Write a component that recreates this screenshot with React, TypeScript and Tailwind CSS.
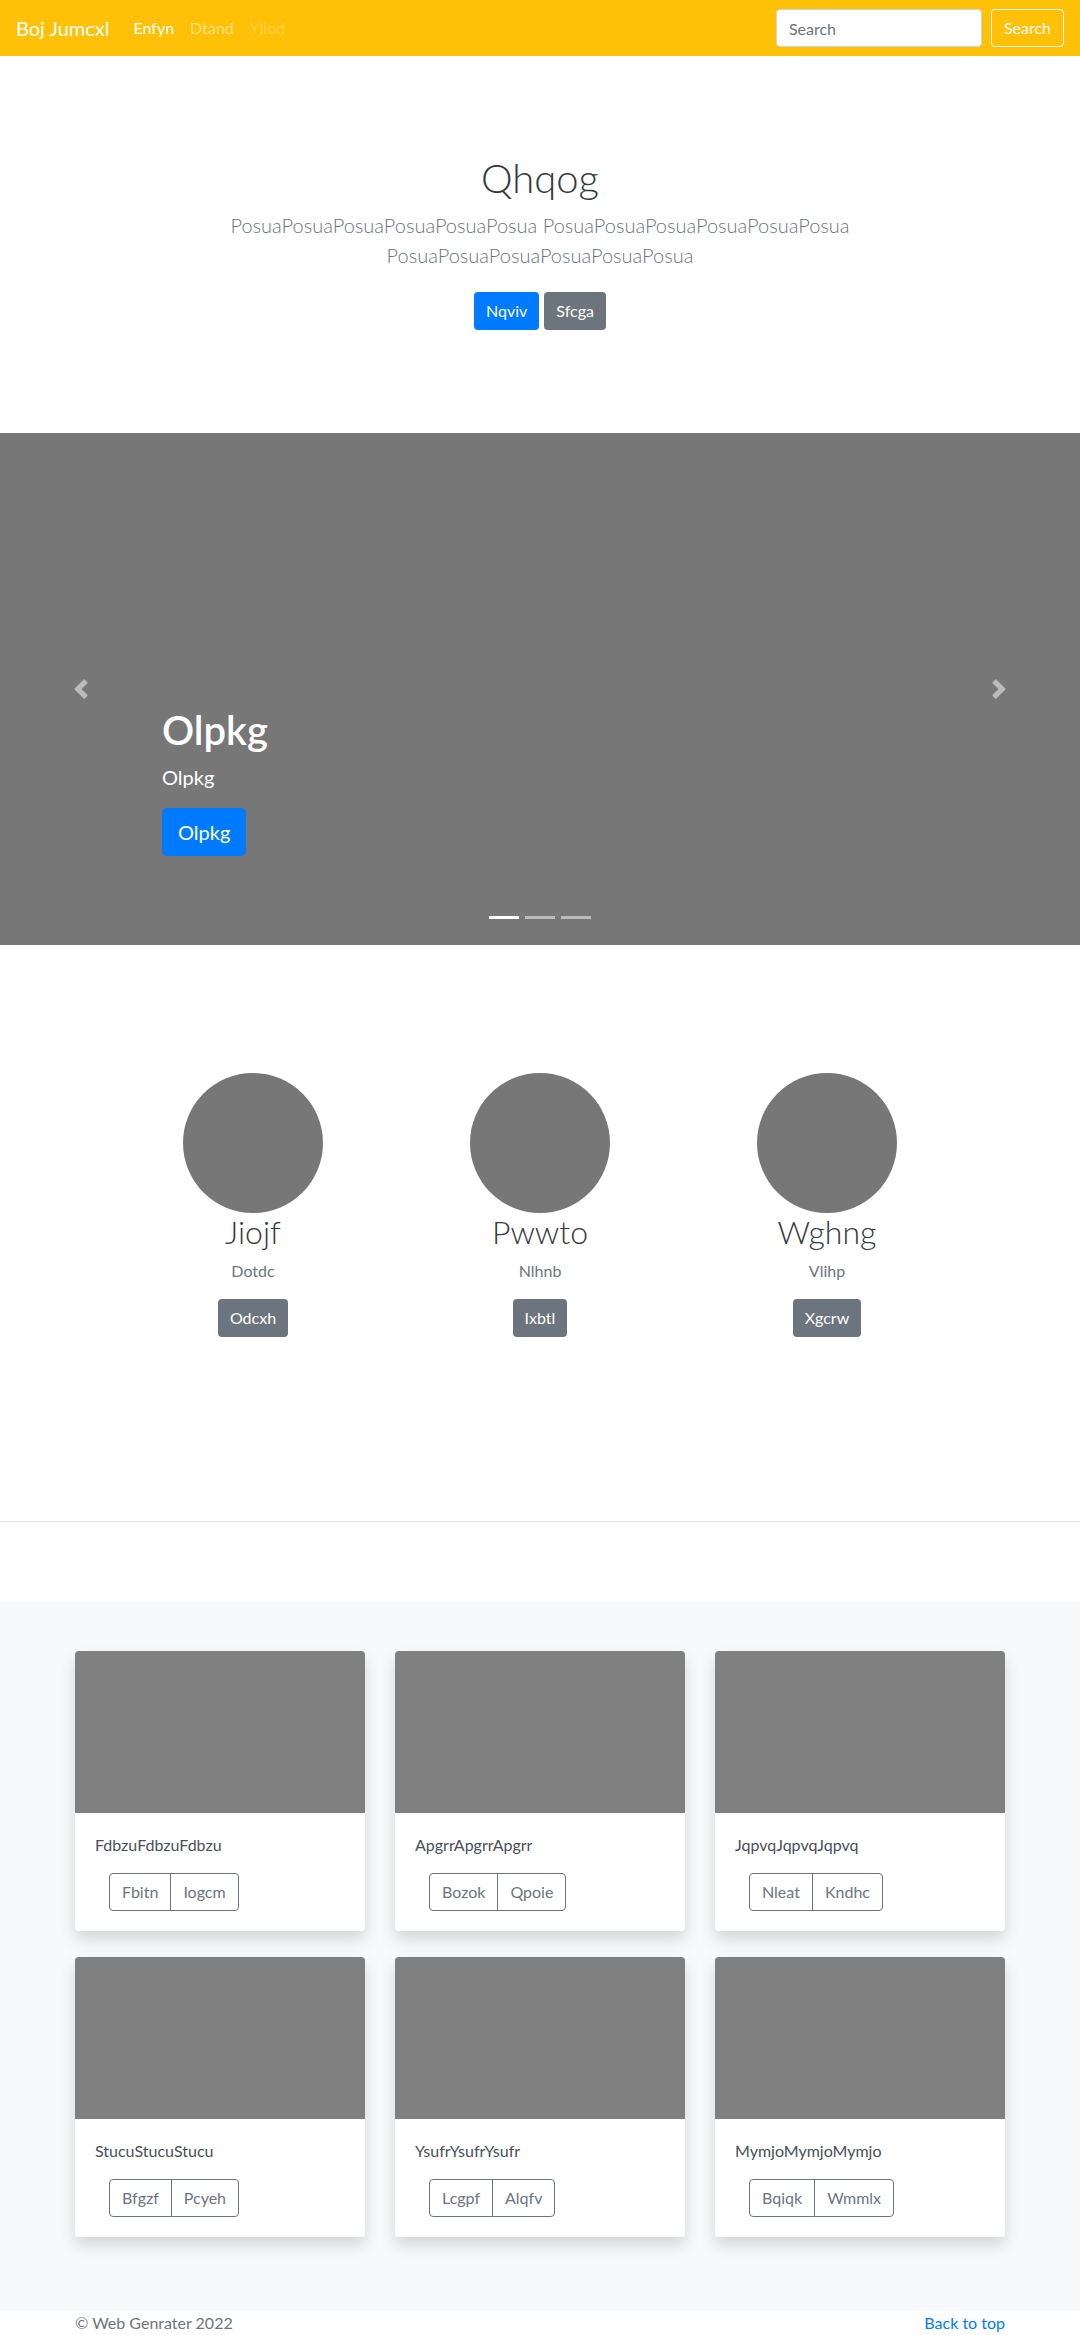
import React from "react";

const navLinks = [
  { label: "Enfyn", cls: "text-white" },
  { label: "Dtand", cls: "text-white/50" },
  { label: "Yllod", cls: "text-white/25" },
];

const team = [
  { name: "Jiojf", role: "Dotdc", action: "Odcxh" },
  { name: "Pwwto", role: "Nlhnb", action: "Ixbtl" },
  { name: "Wghng", role: "Vlihp", action: "Xgcrw" },
];

const cards = [
  { text: "FdbzuFdbzuFdbzu", buttons: ["Fbitn", "Iogcm"] },
  { text: "ApgrrApgrrApgrr", buttons: ["Bozok", "Qpoie"] },
  { text: "JqpvqJqpvqJqpvq", buttons: ["Nleat", "Kndhc"] },
  { text: "StucuStucuStucu", buttons: ["Bfgzf", "Pcyeh"] },
  { text: "YsufrYsufrYsufr", buttons: ["Lcgpf", "Alqfv"] },
  { text: "MymjoMymjoMymjo", buttons: ["Bqiqk", "Wmmlx"] },
];

const Chevron = ({ dir }: { dir: "prev" | "next" }) => (
  <svg viewBox="0 0 8 8" className="w-5 h-5" fill="#fff">
    {dir === "prev" ? (
      <path d="M5.25 0l-4 4 4 4 1.5-1.5-2.5-2.5 2.5-2.5-1.5-1.5z" />
    ) : (
      <path d="M2.75 0l-1.5 1.5 2.5 2.5-2.5 2.5 1.5 1.5 4-4-4-4z" />
    )}
  </svg>
);

const App: React.FC = () => {
  return (
    <div className="min-h-screen bg-white text-[#212529] font-['Lato','Noto_Sans',sans-serif] text-[16px] leading-6">
      {/* Navbar */}
      <nav className="h-14 bg-[#ffc107] flex items-center px-4">
        <span className="text-[20px] leading-[30px] text-white mr-4">Boj Jumcxl</span>
        <ul className="flex items-center">
          {navLinks.map((l) => (
            <li key={l.label} className={`px-2 ${l.cls}`}>
              {l.label}
            </li>
          ))}
        </ul>
        <div className="ml-auto flex items-center gap-[9px]">
          <input
            placeholder="Search"
            className="w-[206px] h-[38px] px-3 bg-white border border-[#ced4da] rounded text-[16px] text-[#495057] placeholder:text-[#6c757d] outline-none"
          />
          <button className="h-[38px] px-3 border border-[#f8f9fa] rounded text-[#f8f9fa]">
            Search
          </button>
        </div>
      </nav>

      {/* Hero */}
      <section className="pt-[98px] pb-[103px] text-center">
        <h1 className="text-[40px] leading-[48px] font-light text-[#343a40] mb-2">Qhqog</h1>
        <p className="w-[700px] mx-auto text-[20px] leading-[30px] font-light text-[#6c757d] mb-[22px]">
          PosuaPosuaPosuaPosuaPosuaPosua PosuaPosuaPosuaPosuaPosuaPosua
          PosuaPosuaPosuaPosuaPosuaPosua
        </p>
        <div className="flex justify-center gap-[5px]">
          <button className="h-[38px] px-3 rounded bg-[#007bff] text-white">Nqviv</button>
          <button className="h-[38px] px-3 rounded bg-[#6c757d] text-white">Sfcga</button>
        </div>
      </section>

      {/* Carousel */}
      <section className="relative h-[512px] bg-[#777] flex flex-col justify-end px-[15%] pb-[89px] text-white">
        <h1 className="text-[40px] leading-[48px] font-semibold mb-2">Olpkg</h1>
        <p className="text-[20px] leading-[30px] mb-4">Olpkg</p>
        <div>
          <button className="h-[48px] px-4 rounded-[5px] bg-[#007bff] text-white text-[20px]">
            Olpkg
          </button>
        </div>
        <div className="absolute left-0 top-0 bottom-0 w-[15%] flex items-center justify-center opacity-50">
          <Chevron dir="prev" />
        </div>
        <div className="absolute right-0 top-0 bottom-0 w-[15%] flex items-center justify-center opacity-50">
          <Chevron dir="next" />
        </div>
        <div className="absolute bottom-[26px] left-0 right-0 flex justify-center gap-[6px]">
          <span className="w-[30px] h-[3px] bg-white" />
          <span className="w-[30px] h-[3px] bg-white/50" />
          <span className="w-[30px] h-[3px] bg-white/50" />
        </div>
      </section>

      {/* Team */}
      <section className="pt-[128px] pb-[184px]">
        <div className="w-[861px] mx-auto grid grid-cols-3">
          {team.map((t) => (
            <div key={t.name} className="flex flex-col items-center text-center">
              <div className="w-[140px] h-[140px] rounded-full bg-[#777]" />
              <h2 className="text-[32px] leading-[38px] font-light text-[#343a40] mb-2">{t.name}</h2>
              <p className="text-[#6c757d] mb-4">{t.role}</p>
              <button className="h-[38px] px-3 rounded bg-[#6c757d] text-white">{t.action}</button>
            </div>
          ))}
        </div>
      </section>

      <hr className="border-0 border-t border-black/10 mb-[80px]" />

      {/* Album */}
      <section className="bg-[#f8f9fa] pt-[49px] pb-[74px]">
        <div className="w-[930px] mx-auto grid grid-cols-3 gap-x-[30px] gap-y-[26px]">
          {cards.map((c) => (
            <div
              key={c.text}
              className="bg-white rounded overflow-hidden shadow-[0_8px_16px_rgba(0,0,0,0.15)]"
            >
              <div className="h-[162px] bg-[#808080]" />
              <div className="p-5">
                <p className="text-[#495057] mb-4">{c.text}</p>
                <div className="ml-[14px] inline-flex">
                  {c.buttons.map((b, i) => (
                    <button
                      key={b}
                      className={`h-[38px] px-3 border border-[#6c757d] text-[#6c757d] ${
                        i === 0 ? "rounded-l" : "rounded-r -ml-px"
                      }`}
                    >
                      {b}
                    </button>
                  ))}
                </div>
              </div>
            </div>
          ))}
        </div>
      </section>

      {/* Footer */}
      <footer className="pb-12">
        <div className="w-[930px] mx-auto flex justify-between">
          <p className="text-[#6c757d]">© Web Genrater 2022</p>
          <a href="#" className="text-[#007bff]">
            Back to top
          </a>
        </div>
      </footer>
    </div>
  );
};

export default App;
